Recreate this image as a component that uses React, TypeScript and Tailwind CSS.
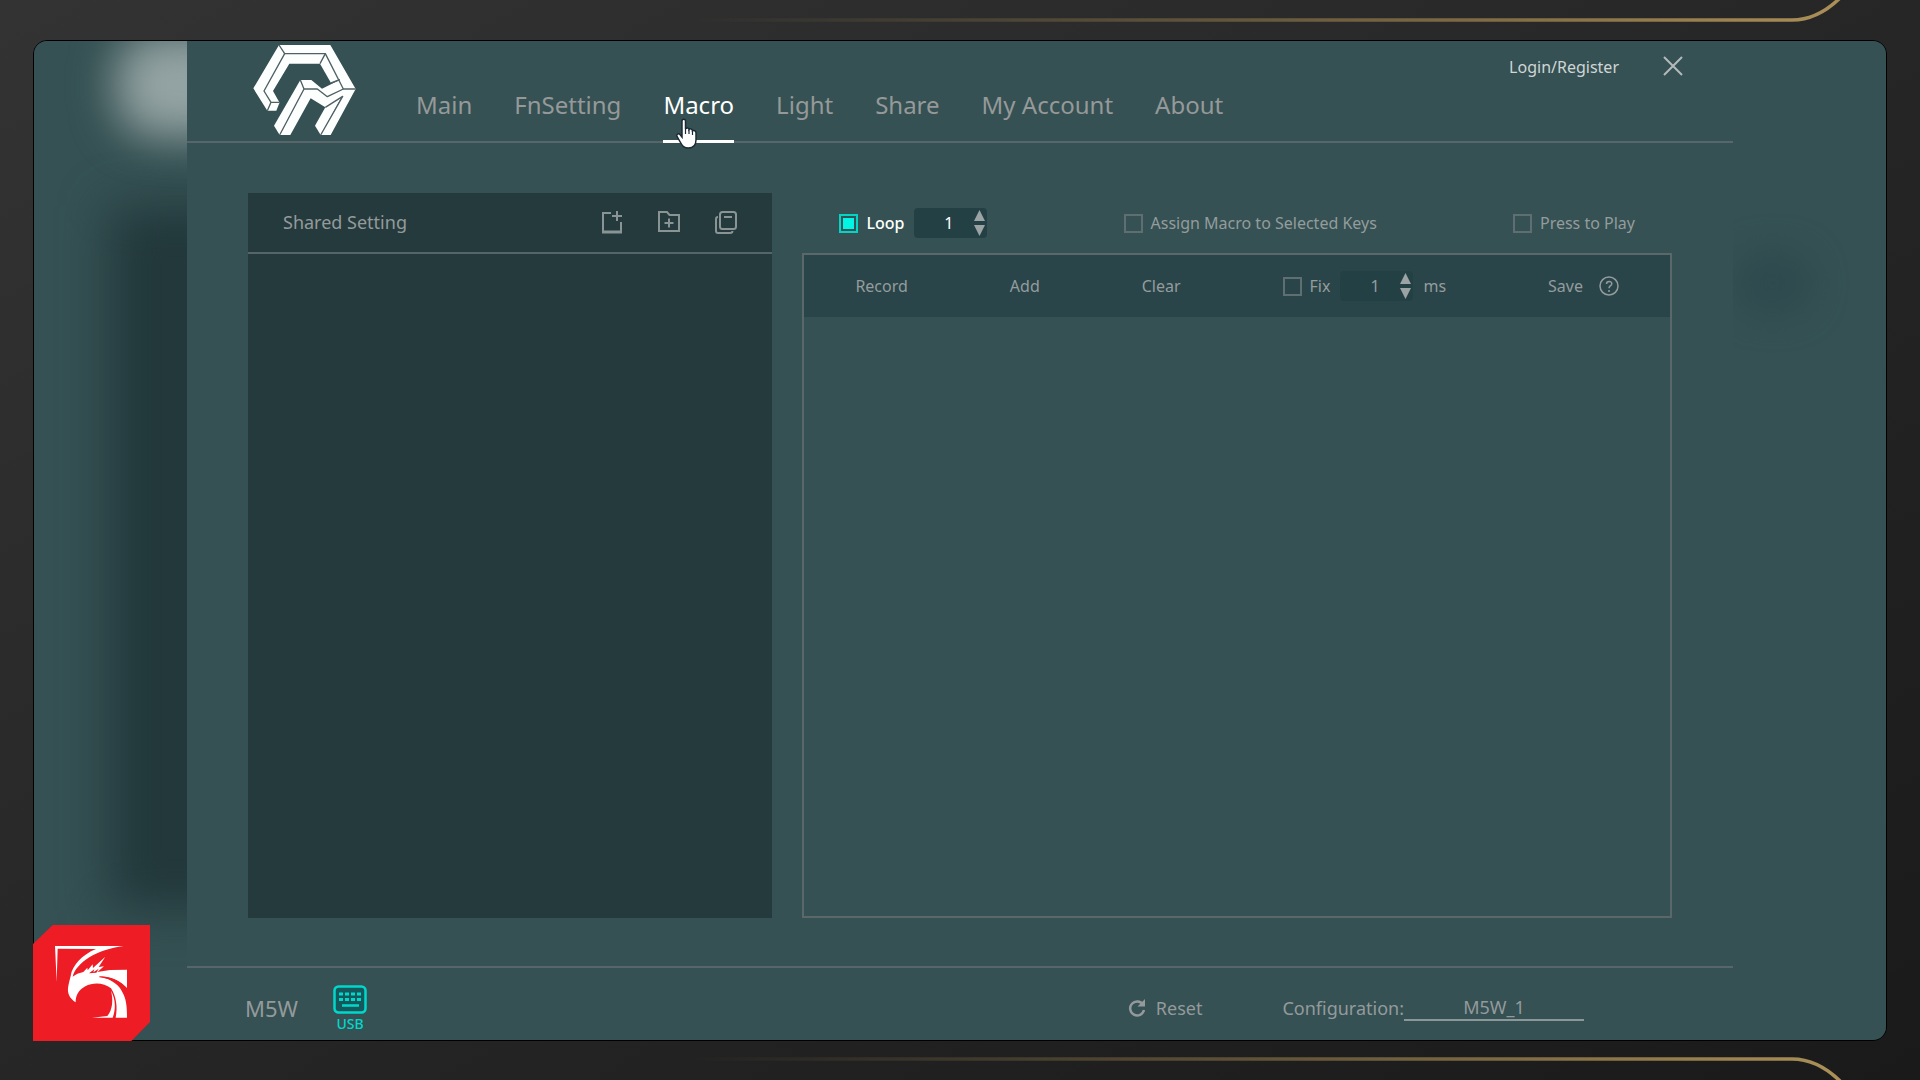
import { Fragment } from 'react';
import type { ReactNode } from 'react';

const tabs = ['Main', 'FnSetting', 'Macro', 'Light', 'Share', 'My Account', 'About'];

function GoldLine({ id, d }: { id: string; d: string }) {
  return (
    <svg width="1152" height="24" viewBox="0 0 1152 24" fill="none">
      <defs>
        <linearGradient id={id} gradientUnits="userSpaceOnUse" x1="0" y1="0" x2="1152" y2="0">
          <stop offset="0" stopColor="#a08550" stopOpacity="0" />
          <stop offset="0.35" stopColor="#a08550" stopOpacity="0.35" />
          <stop offset="0.8" stopColor="#a08550" stopOpacity="0.85" />
          <stop offset="1" stopColor="#ab9058" />
        </linearGradient>
      </defs>
      <path d={d} stroke={`url(#${id})`} strokeWidth="3.5" />
    </svg>
  );
}

function Logo() {
  return (
    <svg className="w-[103px] h-[92px]" viewBox="23 18 309 274">
      <g fill="#fdfefe">
        <path d="M101 20H255L331 152H294L240 46H118Z" />
        <path d="M101 20L118 46L56 158L77 192L66 217L24 150Z" />
        <path d="M118 46H240L224 76H132L83 158L102 192H77L56 158Z" />
        <path d="M77 192H103L93 217H66Z" />
        <path d="M240 46L282 122L257 134L224 76Z" />
        <path d="M165 125H198L230 151L284 124L294 152L246 175L216 152H176Z" />
        <path d="M165 125L176 152L103 290L86 262Z" />
        <path d="M176 152H216L246 175L294 152H331L256 290H226L292 174L240 207L196 180L135 290H103Z" />
        <path d="M240 207L289 176L226 290L209 262Z" />
      </g>
      <g fill="none" stroke="#4f6163" strokeWidth="4" strokeLinejoin="round">
        <path d="M101 20L118 46H240L294 152H331" />
        <path d="M118 46L56 158L77 192H103M77 192L66 217" />
        <path d="M240 46L224 76M257 134L284 124" />
        <path d="M165 125L176 152H216L246 175L294 152" />
        <path d="M176 152L103 290M240 207L292 174L226 290" />
      </g>
    </svg>
  );
}

function DragonBadge() {
  return (
    <svg className="w-[117px] h-[116px]" viewBox="9 15 351 348">
      <path d="M68 15H360V306L304 363H9V72Z" fill="#ee1c25" />
      <g fill="#fff">
        <path d="M75 78H281C240 84 205 95 178 112C150 130 133 150 128 170C138 162 150 158 160 156L172 143L173 151L188 133L189 144L226 110L206 141L222 139L202 156L240 150L291 149V204C272 183 250 173 226 170L208 169C250 180 268 197 278 218C288 237 291 255 291 293H257C264 260 258 228 243 205C222 188 190 186 166 199C146 210 137 226 137 247C120 236 112 221 114 204C116 190 119 180 122 168C126 137 156 104 198 87L83 86L80 186Z" />
        <path d="M243 212C258 240 257 270 248 293H186L232 288C248 268 250 240 243 212Z" />
      </g>
      <path d="M177 160L193 148L190 157L206 146L199 158Z" fill="#ee1c25" />
      <path d="M208 169C248 170 276 188 291 206C272 190 245 177 208 172Z" fill="#ee1c25" />
    </svg>
  );
}

function HandCursor() {
  return (
    <svg className="w-6 h-[31px]" viewBox="0 0 24 31">
      <path
        d="M7 3C7 .5 10.500 .5 10.500 3V11C11 9.500 14 9.700 14 11.500C15 10.300 17.500 10.800 17.500 12.800C19 12 21 12.800 21 15V22C21 27 18 30 13.500 30C9 30 7.500 28 5.500 24.500L2 18.500C1 16.500 3.500 15 5 16.500L7 19Z"
        fill="#fff"
        stroke="#1c2a35"
        strokeWidth="1.500"
      />
      <path d="M10.500 11V16M14 12V16M17.500 13V17" stroke="#1c2a35" strokeWidth="1.200" />
    </svg>
  );
}

function NewIcon() {
  return (
    <svg className="size-6" viewBox="0 0 24 24" fill="none" stroke="currentColor" strokeWidth="2">
      <path d="M11 3H3V22H21V12" />
      <path d="M2 22H22" strokeWidth="3" />
      <path d="M17 1V11M12 6H22" />
    </svg>
  );
}

function FolderIcon() {
  return (
    <svg className="size-6" viewBox="0 0 24 24" fill="none" stroke="currentColor" strokeWidth="2">
      <path d="M2 2H10L12.500 5H22V21H2Z" />
      <path d="M12 8.500V17.500M7.500 13H16.500" />
    </svg>
  );
}

function CopyIcon() {
  return (
    <svg className="size-6" viewBox="0 0 24 24" fill="none" stroke="currentColor" strokeWidth="2">
      <rect x="6" y="2" width="16" height="17" rx="2.500" />
      <path d="M10 7H18" />
      <path d="M4 7C2.500 7 2 8 2 9V21C2 22.500 3 23 4 23H16C17.500 23 18.500 22 18.500 21" />
    </svg>
  );
}

function Check({ id, label, checked }: { id: string; label: string; checked?: boolean }) {
  return (
    <div className="flex items-center gap-2">
      <input
        id={id}
        type="checkbox"
        defaultChecked={checked}
        className="size-[19px] appearance-none border-2 border-[#5f6f71] p-[2px] bg-clip-content checked:border-[#00d5c8] checked:bg-[#00f5e4]"
      />
      <label htmlFor={id} className={checked ? 'text-white font-medium' : ''}>
        {label}
      </label>
    </div>
  );
}

function NumberBox({ label, bright }: { label: string; bright?: boolean }) {
  return (
    <div className="flex items-center h-[30px] w-[73px] rounded-sm bg-[#234145]">
      <input
        type="number"
        aria-label={label}
        defaultValue={1}
        className={`w-[60px] pl-6 text-center outline-none [appearance:textfield] ${bright ? 'text-white' : ''}`}
      />
      <div className="flex flex-col gap-1 text-[#9ba3a5]">
        <button type="button" aria-label="Increase">
          <svg className="w-[11px] h-[11px]" viewBox="0 0 11 11" fill="currentColor"><path d="M5.500 0L11 11H0Z" /></svg>
        </button>
        <button type="button" aria-label="Decrease">
          <svg className="w-[11px] h-[11px]" viewBox="0 0 11 11" fill="currentColor"><path d="M5.500 11L11 0H0Z" /></svg>
        </button>
      </div>
    </div>
  );
}

function SideStrip({ children }: { children: ReactNode }) {
  return <div className="relative w-[153px] shrink-0 overflow-hidden bg-[#355153]">{children}</div>;
}

function Header() {
  return (
    <header className="flex border-b-2 border-[#56666a] pl-[66px] pr-[50px]">
      <div className="pt-[3px]">
        <Logo />
      </div>
      <nav className="flex flex-1 gap-[42px] pl-[60px] pt-12 text-2xl leading-8">
        {tabs.map((tab) => (
          <Fragment key={tab}>
            {tab === 'Macro' ? (
              <a href="#macro" className="relative -mb-[2px] border-b-[3px] border-white pb-[19px] text-white">
                {tab}
                <span className="absolute left-3 top-[29px]">
                  <HandCursor />
                </span>
              </a>
            ) : (
              <a href={`#${tab}`} className="text-[#969999]">{tab}</a>
            )}
          </Fragment>
        ))}
      </nav>
      <div className="flex items-start gap-[44px] pt-[14px]">
        <a href="#login" className="text-base leading-6 text-[#d0d6d6]">Login/Register</a>
        <button type="button" aria-label="Close" className="pt-[1px]">
          <svg className="size-5" viewBox="0 0 20 20" stroke="#b4babc" strokeWidth="2"><path d="M1 1L19 19M19 1L1 19" /></svg>
        </button>
      </div>
    </header>
  );
}

function SharedPanel() {
  return (
    <section className="bg-[#253a3d]">
      <div className="flex h-[61px] items-center justify-between border-b-2 border-[#566567] pl-[35px] pr-[34px] pb-[2px]">
        <h2 className="text-lg text-[#949a9b]">Shared Setting</h2>
        <div className="flex gap-[33px] text-[#8a9495]">
          <button type="button" aria-label="New macro"><NewIcon /></button>
          <button type="button" aria-label="New folder"><FolderIcon /></button>
          <button type="button" aria-label="Copy"><CopyIcon /></button>
        </div>
      </div>
    </section>
  );
}

function MacroPanel() {
  return (
    <section className="flex flex-col text-base leading-6 text-[#949c9d]">
      <div className="flex h-[60px] items-center justify-between px-[37px]">
        <div className="flex items-center gap-[10px]">
          <Check id="loop" label="Loop" checked />
          <NumberBox label="Loop count" bright />
        </div>
        <Check id="assign" label="Assign Macro to Selected Keys" />
        <Check id="press" label="Press to Play" />
      </div>
      <div className="flex-1 border-2 border-[#5a686a]">
        <div className="flex h-[62px] items-center justify-between bg-[#2a4549] px-[51px]">
          <button type="button">Record</button>
          <button type="button">Add</button>
          <button type="button">Clear</button>
          <div className="flex items-center gap-[10px]">
            <Check id="fix" label="Fix" />
            <NumberBox label="Fixed delay" />
            <span>ms</span>
          </div>
          <div className="flex items-center gap-4">
            <button type="button">Save</button>
            <button type="button" aria-label="Help">
              <svg className="size-5" viewBox="0 0 20 20" fill="none" stroke="currentColor" strokeWidth="1.500">
                <circle cx="10" cy="10" r="9" />
                <path d="M7.500 8C7.500 4.500 12.800 4.700 12.800 7.700C12.800 9.700 10 9.700 10 12.300M10 14V16" />
              </svg>
            </button>
          </div>
        </div>
      </div>
    </section>
  );
}

function Footer() {
  return (
    <footer className="flex h-[74px] items-center border-t-2 border-[#56666a] pt-2 pl-[58px] pr-[149px] text-lg text-[#949a9c]">
      <span className="text-[22px]">M5W</span>
      <button type="button" className="ml-[35px] flex flex-col items-center pt-[2px] text-[#00d8cc]">
        <svg className="w-[34px] h-[29px]" viewBox="0 0 34 29" fill="none" stroke="currentColor">
          <rect x="1.500" y="1.500" width="31" height="26" rx="4" strokeWidth="2.500" fill="#16575b" />
          <path d="M6 9H28M6 14.500H28" strokeWidth="3" strokeDasharray="4 2" />
          <path d="M9 20.500H26" strokeWidth="2.500" />
        </svg>
        <span className="text-sm leading-5 font-medium">USB</span>
      </button>
      <button type="button" className="ml-auto flex items-center gap-[10px]">
        <svg className="size-[18px]" viewBox="0 0 18 18" fill="none" stroke="currentColor" strokeWidth="2.500">
          <path d="M15 5.500A7 7 0 1 0 16 11" />
          <path d="M17 0V7.500H9.500Z" fill="currentColor" stroke="none" />
        </svg>
        Reset
      </button>
      <div className="ml-20 flex items-center">
        <label htmlFor="config">Configuration:</label>
        <input
          id="config"
          defaultValue="M5W_1"
          className="w-[180px] border-b-2 border-[#8b9799] text-center leading-6 outline-none"
        />
      </div>
    </footer>
  );
}

export default function App() {
  return (
    <div className="relative flex min-h-screen flex-col overflow-hidden bg-gradient-to-br from-[#333333] to-[#1a1a1a] px-[33px] pt-10 pb-[39px] font-['Noto_Sans',sans-serif]">
      <div className="absolute right-[78px] top-0">
        <GoldLine id="gold-top" d="M0 20H1102C1121 20 1136 12 1151 -3" />
      </div>
      <div className="absolute right-[78px] bottom-0">
        <GoldLine id="gold-bottom" d="M0 3H1102C1121 3 1136 11 1151 26" />
      </div>

      <div className="flex flex-1 overflow-hidden rounded-[14px] border border-black">
        <SideStrip>
          <div className="absolute left-[76px] top-[165px] bottom-[130px] w-40 bg-[#22383b] blur-[24px]" />
          <div className="absolute left-[82px] -top-2 h-[104px] w-36 rounded-[40px] bg-[#94a3a3] blur-[22px]" />
        </SideStrip>

        <main className="flex min-w-0 flex-1 flex-col bg-[#355153]">
          <Header />
          <div className="grid flex-1 grid-cols-[524fr_869fr] gap-[30px] px-[61px] pt-[50px] pb-12">
            <SharedPanel />
            <MacroPanel />
          </div>
          <Footer />
        </main>

        <SideStrip>
          <div className="absolute left-0 top-[210px] h-16 w-20 rounded-full bg-[#2f4a4e] blur-[16px]" />
        </SideStrip>
      </div>

      <div className="absolute left-[33px] bottom-[39px]">
        <DragonBadge />
      </div>
    </div>
  );
}
